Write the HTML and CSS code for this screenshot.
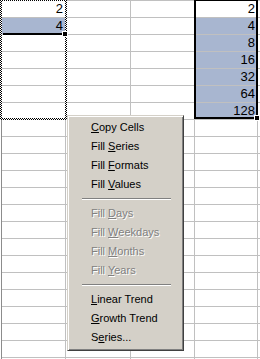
FILE: index.html
```html
<!DOCTYPE html>
<html lang="en">
<head>
  <meta charset="UTF-8">
  <meta name="viewport" content="width=device-width, initial-scale=1.0">
  <title>Fill Series</title>
  <link rel="stylesheet" href="styles.css">
</head>
<body>

  <div class="sheet">
    <div class="grid">
      <div class="cell">2</div><div class="cell"></div><div class="cell"></div><div class="cell">2</div><div class="cell"></div>
      <div class="cell sel">4</div><div class="cell"></div><div class="cell"></div><div class="cell sel">4</div><div class="cell"></div>
      <div class="cell"></div><div class="cell"></div><div class="cell"></div><div class="cell sel">8</div><div class="cell"></div>
      <div class="cell"></div><div class="cell"></div><div class="cell"></div><div class="cell sel">16</div><div class="cell"></div>
      <div class="cell"></div><div class="cell"></div><div class="cell"></div><div class="cell sel">32</div><div class="cell"></div>
      <div class="cell"></div><div class="cell"></div><div class="cell"></div><div class="cell sel">64</div><div class="cell"></div>
      <div class="cell"></div><div class="cell"></div><div class="cell"></div><div class="cell sel">128</div><div class="cell"></div>
      <div class="cell"></div><div class="cell"></div><div class="cell"></div><div class="cell"></div><div class="cell"></div>
      <div class="cell"></div><div class="cell"></div><div class="cell"></div><div class="cell"></div><div class="cell"></div>
      <div class="cell"></div><div class="cell"></div><div class="cell"></div><div class="cell"></div><div class="cell"></div>
      <div class="cell"></div><div class="cell"></div><div class="cell"></div><div class="cell"></div><div class="cell"></div>
      <div class="cell"></div><div class="cell"></div><div class="cell"></div><div class="cell"></div><div class="cell"></div>
      <div class="cell"></div><div class="cell"></div><div class="cell"></div><div class="cell"></div><div class="cell"></div>
      <div class="cell"></div><div class="cell"></div><div class="cell"></div><div class="cell"></div><div class="cell"></div>
      <div class="cell"></div><div class="cell"></div><div class="cell"></div><div class="cell"></div><div class="cell"></div>
      <div class="cell"></div><div class="cell"></div><div class="cell"></div><div class="cell"></div><div class="cell"></div>
      <div class="cell"></div><div class="cell"></div><div class="cell"></div><div class="cell"></div><div class="cell"></div>
      <div class="cell"></div><div class="cell"></div><div class="cell"></div><div class="cell"></div><div class="cell"></div>
      <div class="cell"></div><div class="cell"></div><div class="cell"></div><div class="cell"></div><div class="cell"></div>
      <div class="cell"></div><div class="cell"></div><div class="cell"></div><div class="cell"></div><div class="cell"></div>
      <div class="cell"></div><div class="cell"></div><div class="cell"></div><div class="cell"></div><div class="cell"></div>
      <div class="cell"></div><div class="cell"></div><div class="cell"></div><div class="cell"></div><div class="cell"></div>
    </div>

    <!-- kopiowany zakres (mrowki) -->
    <div class="ants"></div>
    <div class="active-bar"></div>
    <div class="handle handle-a"></div>

    <!-- wynik wypelnienia -->
    <div class="range"></div>
    <div class="handle handle-d"></div>

    <ul class="menu">
      <li><u>C</u>opy Cells</li>
      <li>Fill <u>S</u>eries</li>
      <li>Fill <u>F</u>ormats</li>
      <li>Fill <u>V</u>alues</li>
      <li class="sep"></li>
      <li class="off">Fill <u>D</u>ays</li>
      <li class="off">Fill <u>W</u>eekdays</li>
      <li class="off">Fill <u>M</u>onths</li>
      <li class="off">Fill <u>Y</u>ears</li>
      <li class="sep"></li>
      <li><u>L</u>inear Trend</li>
      <li><u>G</u>rowth Trend</li>
      <li>S<u>e</u>ries...</li>
    </ul>
  </div>

</body>
</html>
```

FILE: styles.css
```css
body {
  margin: 0;
  padding: 0;
  background-color: #fff;
  font-family: "Liberation Sans", Arial, sans-serif;
}

.sheet {
  position: relative;
  width: 260px;
  height: 359px;
  overflow: hidden;
  background-color: #fff;
  padding-left: 1px;
  box-sizing: border-box;
}

.grid {
  display: grid;
  grid-template-columns: 63px 64px 63px 62px 64px;
  grid-auto-rows: 16px;
  gap: 1px;
  padding-top: 1px;
  background-color: #c0c0c0;
  border-left: 1px solid #8c8c8c;
}

.cell {
  background-color: #fff;
  font-size: 13px;
  line-height: 16px;
  text-align: right;
  padding-right: 2px;
  color: #000;
}

.cell.sel {
  background-color: #a8b6d0;
}

.ants {
  position: absolute;
  left: 0;
  top: -1px;
  width: 67px;
  height: 121px;
  box-sizing: border-box;
  padding: 2px;
  background: repeating-conic-gradient(#000 0 25%, #fff 0 50%) 0 0 / 2px 2px;
  -webkit-mask: linear-gradient(#000 0 0) content-box, linear-gradient(#000 0 0);
  -webkit-mask-composite: xor;
  mask-composite: exclude;
}

.active-bar {
  position: absolute;
  left: 3px;
  top: 33px;
  width: 60px;
  height: 2px;
  background-color: #000;
}

.range {
  position: absolute;
  left: 194px;
  top: -1px;
  width: 64px;
  height: 120px;
  box-sizing: border-box;
  border: 2px solid #000;
}

.handle {
  position: absolute;
  width: 4px;
  height: 4px;
  background-color: #000;
  border: 1px solid #fff;
}

.handle-a {
  left: 62px;
  top: 31px;
}

.handle-d {
  left: 254px;
  top: 115px;
}

.menu {
  position: absolute;
  left: 67px;
  top: 115px;
  width: 117px;
  margin: 0;
  padding: 2px 0 3px 0;
  list-style: none;
  box-sizing: border-box;
  background-color: #d4d0c8;
  border: 1px solid;
  border-color: #d4d0c8 #404040 #404040 #d4d0c8;
  box-shadow: inset 1px 1px #fff, inset -1px -1px #808080;
  font-size: 11px;
}

.menu li {
  height: 19px;
  line-height: 19px;
  padding-left: 23px;
  color: #000;
  white-space: nowrap;
}

.menu li.off {
  color: #808080;
  text-shadow: 1px 1px #fff;
}

.menu li.sep {
  height: 0;
  padding: 0;
  margin: 4px 12px 4px 14px;
  border-top: 1px solid #808080;
  border-bottom: 1px solid #fff;
}
```
